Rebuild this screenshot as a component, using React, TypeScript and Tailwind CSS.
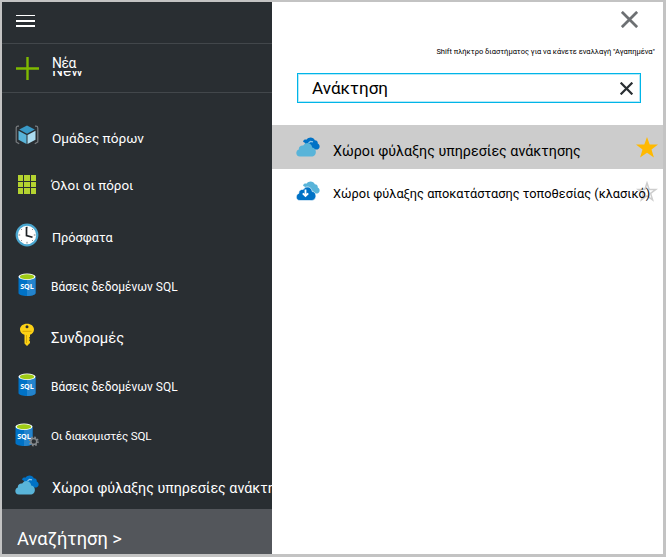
import React from "react";

function Cube() {
  return (
    <svg width="24" height="20" viewBox="0 0 24 20">
      <path d="M4 1.2H3Q1.2 1.2 1.2 3v14l3 1.8M20 1.2h1q1.8 0 1.8 1.8v14l-3 1.8" fill="none" stroke="#7a7d80" strokeWidth="1.2" />
      <path d="M12 .5l7.800 4-7.800 4.200-7.800-4.200z" fill="#3999c6" />
      <path d="M3.500 5.800l8 4.100v9l-8-4.200z" fill="#59b4d9" />
      <path d="M20.500 5.800l-8 4.100v9l8-4.200z" fill="#abdcf0" />
    </svg>
  );
}

function GridIcon() {
  return (
    <div className="grid grid-cols-3 gap-px">
      {Array.from({ length: 9 }, (_, i) => (
        <span key={i} className="size-[5.4px] bg-[#b4d330]" />
      ))}
    </div>
  );
}

function Clock() {
  return (
    <svg width="24" height="24" viewBox="0 0 24 24">
      <circle cx="12" cy="12" r="10.3" fill="#fff" stroke="#4aa6cf" strokeWidth="2.2" />
      <path d="M12 3.5v1.7M12 18.8v1.7M3.5 12h1.7M18.8 12h1.7M6 6l.8.8M18 6l-.8.8M6 18l.8-.8M18 18l-.8-.8" stroke="#777" strokeWidth="1" />
      <path d="M11.5 4v8.5l6 1.8" fill="none" stroke="#1e2226" strokeWidth="1.7" />
    </svg>
  );
}

function Sql({ gear = false }: { gear?: boolean }) {
  return (
    <svg width="24" height="24" viewBox="0 0 24 24" className="overflow-visible">
      <g transform={gear ? "translate(-3 0)" : undefined}>
        <path d="M3.5 3.5V20c0 4 17 4 17 0V3.5z" fill="#0072c6" />
        <path d="M12 5h8.5v15c0 2-4 3-8.500 3z" fill="#2484cd" />
        <ellipse cx="12" cy="3.8" rx="8.500" ry="3.200" fill="#fff" />
        <ellipse cx="12" cy="3.700" rx="7.200" ry="2.500" fill="#9fcb16" />
        <text x="12" y="16.200" textAnchor="middle" fontSize="7.200" fontWeight="700" fill="#fff" className="font-['Open_Sans',sans-serif]">SQL</text>
      </g>
      {gear && (
        <g transform="translate(18.800 18.400)">
          <circle r="4" fill="none" stroke="#85898c" strokeWidth="2" strokeDasharray="1.570 1.570" />
          <circle r="2.900" fill="#292e32" stroke="#85898c" strokeWidth="1.400" />
        </g>
      )}
    </svg>
  );
}

function KeyIcon() {
  return (
    <svg width="24" height="24" viewBox="0 0 24 24">
      <path fillRule="evenodd" d="M12 .8C16 .8 19 3.200 19 6.500c0 2.500-1.600 4.600-4 5.300v2l-1 1 1 1.200-1 1.200 1 1.300v1.500L12 23l-2.500-2.500v-8.700C6.800 11 5 9 5 6.500 5 3.200 8 .8 12 .8zM12 2.300a1.500 1.500 0 100 3 1.500 1.500 0 000-3z" fill="#fcd116" />
      <path d="M7.500 8.300h9M11.500 12v8" stroke="#d8a600" strokeWidth="1" />
    </svg>
  );
}

function Clouds({ classic = false }: { classic?: boolean }) {
  const back = classic ? "#59b4d9" : "#0072c6";
  const front = classic ? "#0072c6" : "#59b4d9";
  const edge = classic ? "#fff" : "none";
  return (
    <svg width="24" height="20" viewBox="0 0 24 20">
      <path d="M8.500 5.500c-1.700 0-1.800-1.700-.5-2.600 1-.8 2.400-.4 2.800-.4C12.500-.3 17.500-.2 18.800 3.200c2.300 0 3.300 1.800 2.900 3.400 2.600 1.200 2.600 5-.3 6H13z" fill={back} />
      {!classic && <path d="M12.500 6l2-1.700 2.500.6" fill="none" stroke="#8fc5e6" strokeWidth="1.200" />}
      <path d="M4 19.500C-.8 19.500-.6 13.300 2.800 12.400 2.600 9.200 5.200 8 7.200 8.500 9.600 4.300 15.600 5.500 16.200 10.500c4 .1 5.300 6.600 1 8.700-1 .5-2 .3-3 .3z" fill={front} stroke={edge} strokeWidth=".6" />
      {classic && <path d="M9.500 8.500v6M6.800 12.300l2.700 2.700 2.700-2.700" fill="none" stroke="#fff" strokeWidth="1.800" />}
    </svg>
  );
}

function Cross({ size, width, color }: { size: number; width: number; color: string }) {
  return (
    <svg width={size} height={size} viewBox="0 0 16 16">
      <path d="M.8.8l14.400 14.400M15.200.8L.8 15.200" stroke={color} strokeWidth={width} />
    </svg>
  );
}

function Star({ filled = false }: { filled?: boolean }) {
  return (
    <svg width="22" height="21" viewBox="0 0 22 21">
      {filled ? (
        <path d="M11 0l2.700 7.500H22l-6.500 4.900 2.400 8L11 15.700l-6.900 4.700 2.400-8L0 7.500h8.300z" fill="#ffb900" />
      ) : (
        <path d="M11 2l2.200 6.400h6.800l-5.400 4 2 6.400L11 14.900l-5.600 3.900 2-6.400L2 8.400h6.800z" fill="none" stroke="#cdcdcd" strokeWidth="1.500" />
      )}
    </svg>
  );
}

const rows = [
  { text: "Ομάδες πόρων", icon: <Cube />, cls: "text-[13.63px] pt-[18px]" },
  { text: "Όλοι οι πόροι", icon: <GridIcon />, cls: "text-[13.4px] pt-[16px] -ml-px" },
  { text: "Πρόσφατα", icon: <Clock />, cls: "text-[12.75px] pt-[18px]" },
  { text: "Βάσεις δεδομένων SQL", icon: <Sql />, cls: "text-[11.95px] pt-[17px] -ml-px" },
  { text: "Συνδρομές", icon: <KeyIcon />, cls: "text-[14.8px] pt-[18px] -ml-px" },
  { text: "Βάσεις δεδομένων SQL", icon: <Sql />, cls: "text-[11.95px] pt-[17px] -ml-px" },
  { text: "Οι διακομιστές SQL", icon: <Sql gear />, cls: "text-[11.6px] tracking-[-0.2px] pt-[16px] -ml-px" },
  { text: "Χώροι φύλαξης υπηρεσίες ανάκτησης", icon: <Clouds />, cls: "text-[14.31px] pt-[18px]" },
];

export default function App() {
  return (
    <div className="flex h-[557px] w-[666px] overflow-hidden border-t-2 border-r-3 border-b-3 border-l-2 border-[#c3c3c3] bg-white font-['Roboto','Noto_Sans',sans-serif] leading-5">
      <aside className="flex w-[270px] shrink-0 flex-col overflow-hidden bg-[#292e32] text-white">
        <div className="flex h-[42px] shrink-0 flex-col border-b border-[#42474b] pt-[13px] pl-3.5">
          <span className="h-px w-[19px] bg-white" />
          <span className="mt-1 h-0.5 w-[19px] bg-white" />
          <span className="mt-[3px] h-0.5 w-[19px] bg-white" />
        </div>
        <div className="flex h-[49px] shrink-0 border-b border-[#42474b] pl-3.5">
          <svg width="23" height="23" viewBox="0 0 23 23" className="mt-[13px]">
            <path d="M11.500 0v23M0 11.500h23" stroke="#7fba00" strokeWidth="2.400" />
          </svg>
          <div className="pl-[13px] pt-[11px]">
            <div className="text-[13.800px] leading-[16px] tracking-[-0.4px]">Νέα</div>
            <div className="flex h-[6px] items-end overflow-hidden">
              <span className="text-[15.500px] leading-[12px]">New</span>
            </div>
          </div>
        </div>
        <nav className="flex h-[416px] shrink-0 flex-col pt-[17px]">
          {rows.map((r, i) => (
            <div key={i} className="flex h-[50px] shrink-0 pl-[13px]">
              <div className="mr-[13px] flex h-[49px] w-6 shrink-0 items-center justify-center">{r.icon}</div>
              <div className={"whitespace-nowrap " + r.cls}>{r.text}</div>
            </div>
          ))}
        </nav>
        <div className="h-[45px] shrink-0 bg-[#53565b] pt-[20px] pl-[15px] text-[18.28px]">Αναζήτηση &gt;</div>
      </aside>
      <main className="flex min-w-0 flex-1 flex-col bg-white text-black">
        <div className="flex h-[34px] justify-end pt-[9px] pr-[25px]">
          <Cross size={17} width={2.6} color="#6d7073" />
        </div>
        <div className="h-[37px] pt-[6px] pr-[8px] text-right text-[7.510px] whitespace-nowrap">
          Shift πλήκτρο διαστήματος για να κάνετε εναλλαγή "Αγαπημένα"
        </div>
        <div className="ml-[25px] flex h-[30px] w-[344px] items-center justify-between border border-[#00b5e8] pr-[7px] pl-[14px] text-[17.080px] ring-1 ring-[#b5e9f8] ring-inset">
          <span className="-mt-px">Ανάκτηση</span>
          <Cross size={13} width={2.8} color="#292e32" />
        </div>
        <div className="mt-[22px] flex h-11 bg-[#ccc] pl-6">
          <div className="pt-3"><Clouds /></div>
          <div className="w-[316px] pt-4 pl-[13px] text-[14.310px] whitespace-nowrap">Χώροι φύλαξης υπηρεσίες ανάκτησης</div>
          <div className="pt-3"><Star filled /></div>
        </div>
        <div className="flex h-11 pl-6">
          <div className="pt-3"><Clouds classic /></div>
          <div className="z-10 w-[316px] pt-[15px] pl-[13px] text-[12.780px] whitespace-nowrap">Χώροι φύλαξης αποκατάστασης τοποθεσίας (κλασικό)</div>
          <div className="pt-3"><Star /></div>
        </div>
      </main>
    </div>
  );
}
